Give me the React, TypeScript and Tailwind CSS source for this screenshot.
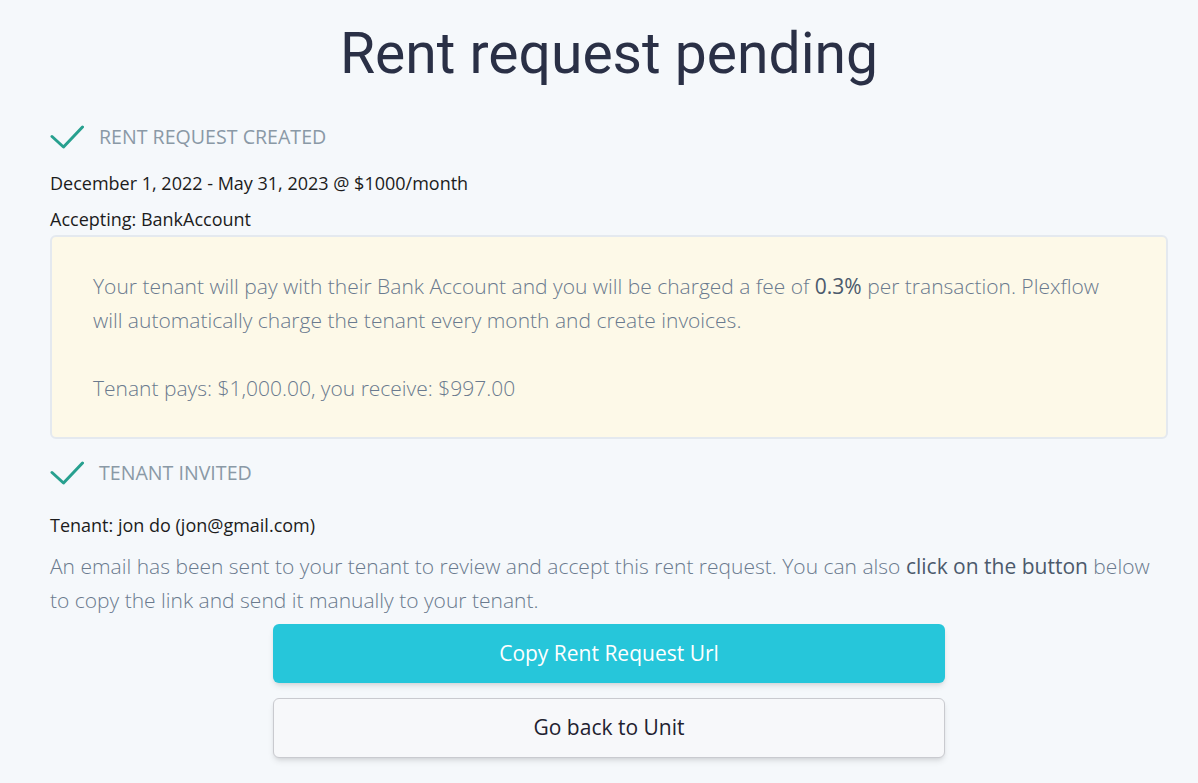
function Step({ label }: { label: string }) {
    return (
        <div className="flex h-[30px] items-center gap-[15px]">
            <svg width="34" height="24" viewBox="0 0 34 24" fill="none" className="shrink-0">
                <path
                    d="M2 11.5 L13.5 22 L32.5 2"
                    stroke="#27a08f"
                    strokeWidth="3"
                    strokeLinecap="round"
                    strokeLinejoin="round"
                />
            </svg>
            <span className="text-[19.6px] uppercase text-[#8a99a6]">{label}</span>
        </div>
    );
}

export default function App() {
    return (
        <div
            className="min-h-screen bg-[#f5f8fb] pl-[50px] pr-[30px] pb-6"
            style={{ fontFamily: '"Open Sans", "Noto Sans", sans-serif' }}
        >
            <h1
                className="pt-[20px] text-center text-[57px] leading-[68px] text-[#2a3046]"
                style={{ fontFamily: 'Roboto, "Noto Sans", sans-serif' }}
            >
                Rent request pending
            </h1>

            <div className="mt-[34px]">
                <Step label="Rent request created" />
            </div>
            <p className="mt-[19px] text-[18px] leading-[24px] text-[#1c1c1c]">
                December 1, 2022 - May 31, 2023 @ $1000/month
            </p>
            <p className="mt-[12px] text-[18px] leading-[24px] text-[#1c1c1c]">Accepting: BankAccount</p>

            <div className="mt-[4px] rounded-md border-2 border-[#e4e9ef] bg-[#fdf9e8] px-[41px] pt-[32px] pb-[32px] text-[21px] font-light leading-[34px] text-[#6a7a8e]">
                <p className="max-w-[1020px]">
                    Your tenant will pay with their Bank Account and you will be charged a fee of{" "}
                    <span className="font-normal text-[#4c5a6c]">0.3%</span> per transaction. Plexflow
                    will automatically charge the tenant every month and create invoices.
                </p>
                <p className="mt-[34px]">Tenant pays: $1,000.00, you receive: $997.00</p>
            </div>

            <div className="mt-[19px]">
                <Step label="Tenant invited" />
            </div>
            <p className="mt-[25px] text-[18px] leading-[24px] text-[#1c1c1c]">Tenant: jon do (jon@gmail.com)</p>
            <p className="mt-[12px] max-w-[1105px] text-[21px] font-light leading-[34px] text-[#6a7a8e]">
                An email has been sent to your tenant to review and accept this rent request. You can
                also <span className="font-normal text-[#4c5a6c]">click on the button</span> below to
                copy the link and send it manually to your tenant.
            </p>

            <div className="mx-auto mt-[7px] flex w-[672px] flex-col gap-[15px]">
                <button className="h-[59px] rounded-md bg-[#26c6da] text-[21px] text-white shadow-md">
                    Copy Rent Request Url
                </button>
                <button className="h-[60px] rounded-md border border-[#c9cacf] bg-[#f7f8fa] text-[21px] text-[#1f2230] shadow-md">
                    Go back to Unit
                </button>
            </div>
        </div>
    );
}
